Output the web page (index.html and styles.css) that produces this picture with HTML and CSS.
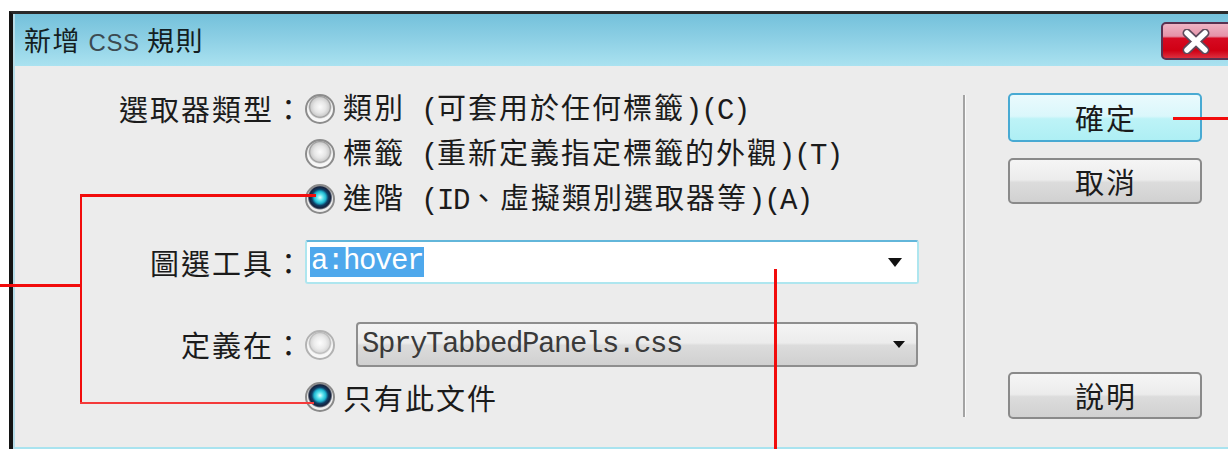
FILE: index.html
```html
<!DOCTYPE html>
<html lang="zh-Hant">
<head>
<meta charset="utf-8">
<title>新增 CSS 規則</title>
<link rel="stylesheet" href="styles.css">
</head>
<body>
<div class="window">
  <div class="frame">
    <header class="titlebar">
      <h1 class="title">新增 <span class="title-latin">CSS</span> 規則</h1>
      <button class="close" type="button" aria-label="關閉">
        <svg viewBox="0 0 28 25" width="28" height="25" aria-hidden="true">
          <path d="M5 4 L23 21 M23 4 L5 21" stroke="#5d4a5c" stroke-width="9" stroke-linecap="round" fill="none"/>
          <path d="M5 4 L23 21 M23 4 L5 21" stroke="#ffffff" stroke-width="5.5" stroke-linecap="round" fill="none"/>
        </svg>
      </button>
    </header>

    <main class="content">
      <form class="rule-form">
        <div class="row">
          <span class="label">選取器類型：</span>
          <label class="option"><span class="radio"></span><span class="text">類別<span class="en"> (</span>可套用於任何標籤<span class="en">)(C)</span></span></label>
        </div>
        <div class="row">
          <span class="label"></span>
          <label class="option"><span class="radio"></span><span class="text">標籤<span class="en"> (</span>重新定義指定標籤的外觀<span class="en">)(T)</span></span></label>
        </div>
        <div class="row">
          <span class="label"></span>
          <label class="option"><span class="radio is-checked"></span><span class="text">進階<span class="en"> (ID</span>、虛擬類別選取器等<span class="en">)(A)</span></span></label>
        </div>

        <div class="row row-tool">
          <span class="label">圖選工具：</span>
          <div class="combo">
            <span class="combo-value">a:hover</span>
            <span class="arrow arrow-lg"></span>
          </div>
        </div>

        <div class="row row-define">
          <span class="label">定義在：</span>
          <span class="radio is-disabled"></span>
          <div class="select">
            <span class="select-value">SpryTabbedPanels.css</span>
            <span class="arrow arrow-sm"></span>
          </div>
        </div>
        <div class="row row-doc">
          <span class="label"></span>
          <label class="option"><span class="radio is-checked"></span><span class="text">只有此文件</span></label>
        </div>
      </form>

      <div class="divider"></div>

      <div class="actions">
        <button class="btn btn-primary" type="button">確定</button>
        <button class="btn btn-cancel" type="button">取消</button>
        <button class="btn btn-help" type="button">說明</button>
      </div>
    </main>
  </div>
</div>

<!-- red callout lines drawn over the dialog -->
<div class="callout c-ok"></div>
<div class="callout c-left"></div>
<div class="callout c-bracket"></div>
<div class="callout c-top"></div>
<div class="callout c-bottom"></div>
<div class="callout c-tool"></div>
</body>
</html>
```

FILE: styles.css
```css
* { box-sizing: border-box; }

html, body {
  margin: 0;
  padding: 0;
}

body {
  width: 1228px;
  height: 449px;
  overflow: hidden;
  position: relative;
  background: #ffffff;
  font-family: "Noto Sans CJK TC", "Noto Sans CJK SC", sans-serif;
  color: #1b1b1b;
}

/* window frame */
.window {
  margin: 11px 0 0 9px;
  width: 1240px;
  height: 438px;
  border-top: 3px solid #2a2a2a;
  border-left: 4px solid #141414;
  display: flex;
  flex-direction: column;
}

.frame {
  flex: 1;
  display: flex;
  flex-direction: column;
  border-left: 2px solid #b6dce8;
}

/* title bar */
.titlebar {
  height: 52px;
  flex: none;
  display: flex;
  align-items: flex-start;
  padding-left: 9px;
  background: linear-gradient(180deg, #74c1db 0%, #8ed0e5 50%, #aae2f0 100%);
}

.title {
  margin: 0;
  font-weight: 400;
  font-size: 27px;
  letter-spacing: 1.5px;
  line-height: 52px;
  color: #141e22;
  white-space: pre;
}

.title-latin {
  font-family: "Liberation Sans", sans-serif;
  font-size: 24px;
  letter-spacing: 0.5px;
  color: #3c4a51;
}

.close {
  margin: 8px 14px 0 auto;
  width: 74px;
  height: 38px;
  padding: 0 0 0 19px;
  border: 2px solid #5a3150;
  border-radius: 5px;
  background: linear-gradient(180deg, #eeb4c4 0%, #e592a8 36%, #d60a22 42%, #d00014 78%, #dc3040 100%);
  display: flex;
  align-items: center;
  justify-content: flex-start;
}

.close svg { display: block; }

/* dialog body */
.content {
  height: 383px;
  display: flex;
  background: #ececec;
  border-bottom: 2px solid #a9e3ef;
}

.rule-form {
  width: 940px;
  flex: none;
  padding-top: 20px;
  display: flex;
  flex-direction: column;
}

.row {
  display: flex;
  align-items: center;
  height: 45px;
  flex: none;
}

.row-tool { margin-top: 19px; height: 44px; }
.row-define { margin-top: 38px; height: 45px; }
.row-doc { margin-top: 15px; height: 30px; }

.label {
  width: 290px;
  flex: none;
  text-align: right;
  font-size: 29px;
  letter-spacing: 2px;
  line-height: 1;
  white-space: nowrap;
}

.option {
  display: flex;
  align-items: center;
}

.text {
  font-size: 29px;
  letter-spacing: 2px;
  line-height: 1;
  white-space: pre;
}

.en {
  font-family: "Liberation Mono", monospace;
  font-size: 29px;
  letter-spacing: -1.4px;
}

/* radio buttons */
.radio {
  width: 30px;
  height: 30px;
  flex: none;
  margin-right: 8px;
  border-radius: 50%;
  border: 2px solid #8c8c8c;
  background: radial-gradient(circle at 50% 42%, #fbfbfb 0%, #e6e6e6 30%, #cfcfcf 46%, #9a9a9a 52%, #f6f6f6 60%, #fdfdfd 100%);
}

.radio.is-checked {
  border-color: #8a8a8a;
  background: radial-gradient(circle at 50% 44%, #e4ffff 0%, #5fe3ee 16%, #1fb6d0 30%, #0f3e66 42%, #16223c 54%, #4a5468 58%, #ececec 64%, #fafafa 100%);
}

.radio.is-disabled {
  margin-right: 21px;
  border-color: #b2b2b2;
  background: radial-gradient(circle at 50% 42%, #fdfdfd 0%, #ececec 30%, #dadada 46%, #b8b8b8 52%, #f6f6f6 60%, #fdfdfd 100%);
}

/* editable combo box */
.combo {
  width: 614px;
  height: 44px;
  display: flex;
  align-items: center;
  padding-left: 3px;
  background: #ffffff;
  border: 2px solid #aee6ef;
  border-top-color: #62b6da;
  border-radius: 3px;
}

.combo-value {
  height: 30px;
  line-height: 30px;
  padding: 0 1px;
  background: #4ea8ec;
  color: #ffffff;
  font-family: "Liberation Mono", monospace;
  font-size: 29px;
  letter-spacing: -1.4px;
}

/* drop-down list */
.select {
  width: 562px;
  height: 45px;
  display: flex;
  align-items: center;
  padding-left: 4px;
  border: 2px solid #8e8e8e;
  border-radius: 4px;
  background: linear-gradient(180deg, #f4f4f4 0%, #ececec 46%, #dcdcdc 52%, #d0d0d0 100%);
  color: #3a3a3a;
  font-family: "Liberation Mono", monospace;
  font-size: 29px;
  letter-spacing: -1.4px;
}

.arrow {
  margin-left: auto;
  width: 0;
  height: 0;
  border-style: solid;
  border-color: #111111 transparent transparent transparent;
}

.arrow-lg {
  margin-right: 15px;
  border-width: 9px 7.5px 0 7.5px;
}

.arrow-sm {
  margin-right: 11px;
  border-width: 7px 6px 0 6px;
}

/* separator and command buttons */
.divider {
  width: 3px;
  flex: none;
  margin: 29px 0 30px 8px;
  background: #a3a3a3;
  border-right: 1px solid #fbfbfb;
}

.actions {
  width: 194px;
  flex: none;
  margin-left: 42px;
  padding: 27px 0 28px;
  display: flex;
  flex-direction: column;
}

.btn {
  height: 48px;
  padding: 0 0 0 2px;
  border: 2px solid #8a8a8a;
  border-radius: 5px;
  background: linear-gradient(180deg, #f5f5f5 0%, #ececec 47%, #dcdcdc 53%, #d1d1d1 100%);
  font-family: "Noto Sans CJK TC", "Noto Sans CJK SC", sans-serif;
  font-size: 29px;
  letter-spacing: 2px;
  line-height: 1;
  color: #1b1b1b;
}

.btn-primary {
  height: 49px;
  border-color: #48aad3;
  background: linear-gradient(180deg, #eafafd 0%, #daf7fb 47%, #bdf3f7 53%, #aeeff4 100%);
}

.btn-cancel { margin-top: 16px; height: 46px; }
.btn-help { margin-top: auto; height: 47px; }

/* callout lines */
.callout {
  position: absolute;
  background: #f20c0c;
}

.c-ok { left: 1173px; top: 117px; width: 60px; height: 3px; }
.c-left { left: 0; top: 284px; width: 82px; height: 3px; }
.c-bracket { left: 80px; top: 194px; width: 2px; height: 210px; }
.c-top { left: 80px; top: 194px; width: 236px; height: 3px; }
.c-bottom { left: 80px; top: 402px; width: 234px; height: 2px; background: #f43a3a; }
.c-tool { left: 774px; top: 269px; width: 3px; height: 180px; }
```
